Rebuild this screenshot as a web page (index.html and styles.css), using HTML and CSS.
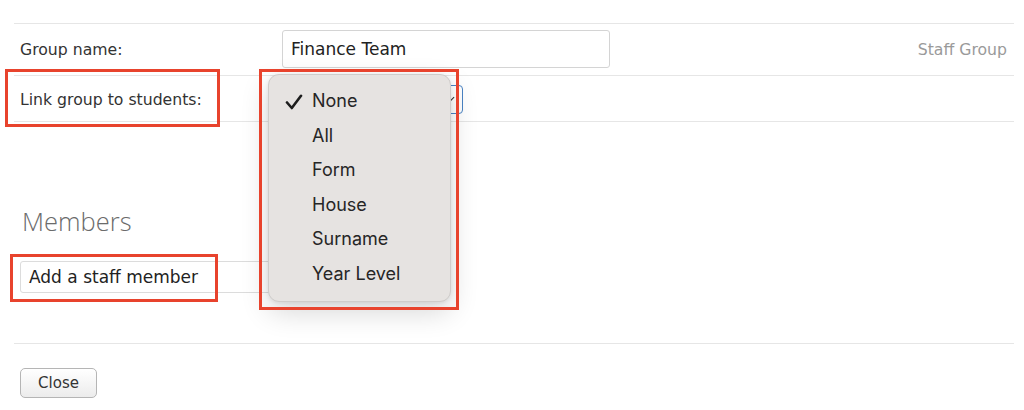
FILE: index.html
```html
<!DOCTYPE html>
<html>
<head>
    <meta charset="utf-8">
    <title>Edit group</title>
    <link rel="stylesheet" href="styles.css">
</head>
<body>
    <div class="panel">
        <div class="row row-name">
            <label class="label">Group name:</label>
            <div class="text-input name-input">Finance Team</div>
            <span class="group-type">Staff Group</span>
        </div>
        <div class="row row-link">
            <label class="label">Link group to students:</label>
            <div class="select-wrap">
                <div class="select">
                    <span class="chevron"></span>
                </div>
                <ul class="menu">
                    <li class="selected">
                        <svg class="tick" width="18" height="16" viewBox="0 0 18 16"><path d="M2 8.5 L6.8 14 L16 1.8" fill="none" stroke="#1d1d1d" stroke-width="2.6" stroke-linecap="round" stroke-linejoin="round"/></svg>
                        None
                    </li>
                    <li>All</li>
                    <li>Form</li>
                    <li>House</li>
                    <li>Surname</li>
                    <li>Year Level</li>
                </ul>
            </div>
        </div>

        <div class="members">
            <h2>Members</h2>
            <div class="text-input member-input">Add a staff member</div>
        </div>

        <div class="footer">
            <button class="btn">Close</button>
        </div>
    </div>

    <!-- annotation boxes -->
    <div class="mark mark-label"></div>
    <div class="mark mark-menu"></div>
    <div class="mark mark-member"></div>
</body>
</html>
```

FILE: styles.css
```css
* { box-sizing: border-box; }
html, body { margin: 0; padding: 0; }
body { background: #fff; color: #333; font-family: "DejaVu Sans", Verdana, sans-serif; font-size: 15.7px; position: relative; width: 1024px; height: 410px; overflow: hidden; }

.panel { padding: 23px 10px 0 14px; }
.row { display: flex; align-items: center; border-top: 1px solid #e6e6e6; }
.row-name { height: 52px; padding-bottom: 1px; }
.row-link { height: 47px; border-bottom: 1px solid #e6e6e6; padding-top: 2px; }
.label { width: 268px; padding-left: 6px; color: #333; }

.text-input { border: 1px solid #d4d4d4; border-radius: 3px; font-size: 17px; color: #222; padding: 0 8px; display: flex; align-items: center; }
.name-input { width: 328px; height: 38px; }
.group-type { margin-left: auto; padding-right: 7px; color: #9a9a9a; }

.select-wrap { position: relative; }
.select { width: 181px; height: 29px; border: 1px solid #4a83c4; border-radius: 4px; background: #fff; position: relative; }
.chevron { position: absolute; right: 9px; top: 8px; width: 7px; height: 7px; border-right: 1.5px solid #333; border-bottom: 1.5px solid #333; transform: rotate(45deg); }

.menu { position: absolute; left: -14px; top: -11px; width: 183px; margin: 0; padding: 9px 0; list-style: none; background: #e6e3e1; border: 1px solid #cfccca; border-radius: 11px; box-shadow: 0 10px 28px rgba(0,0,0,0.16), 0 1px 4px rgba(0,0,0,0.08); font-family: Inter, "Noto Sans", sans-serif; font-size: 18px; color: #262626; }
.menu li { height: 34.6px; line-height: 34.6px; padding-left: 43px; position: relative; }
.tick { position: absolute; left: 16px; top: 10px; }

.members { padding-top: 82px; padding-bottom: 50px; border-bottom: 1px solid #e6e6e6; }
.members h2 { margin: 0 0 23px 8px; font-family: "Open Sans", sans-serif; font-weight: 300; font-size: 25.5px; color: #6b6b6b; line-height: 34px; }
.member-input { width: 430px; height: 32px; margin-left: 6px; border-color: #dcdcdc; }

.footer { padding: 24px 0 0 6px; }
.btn { width: 77px; height: 30px; font-family: "DejaVu Sans", Verdana, sans-serif; font-size: 15px; color: #333; background: linear-gradient(#fff, #ececec); border: 1px solid #b5b5b5; border-radius: 5px; padding: 0; }

.mark { position: absolute; border: 3px solid #e8432d; }
.mark-label { left: 5px; top: 69px; width: 215px; height: 58px; }
.mark-menu { left: 259px; top: 69px; width: 200px; height: 241px; }
.mark-member { left: 10px; top: 254px; width: 208px; height: 48px; }
```
